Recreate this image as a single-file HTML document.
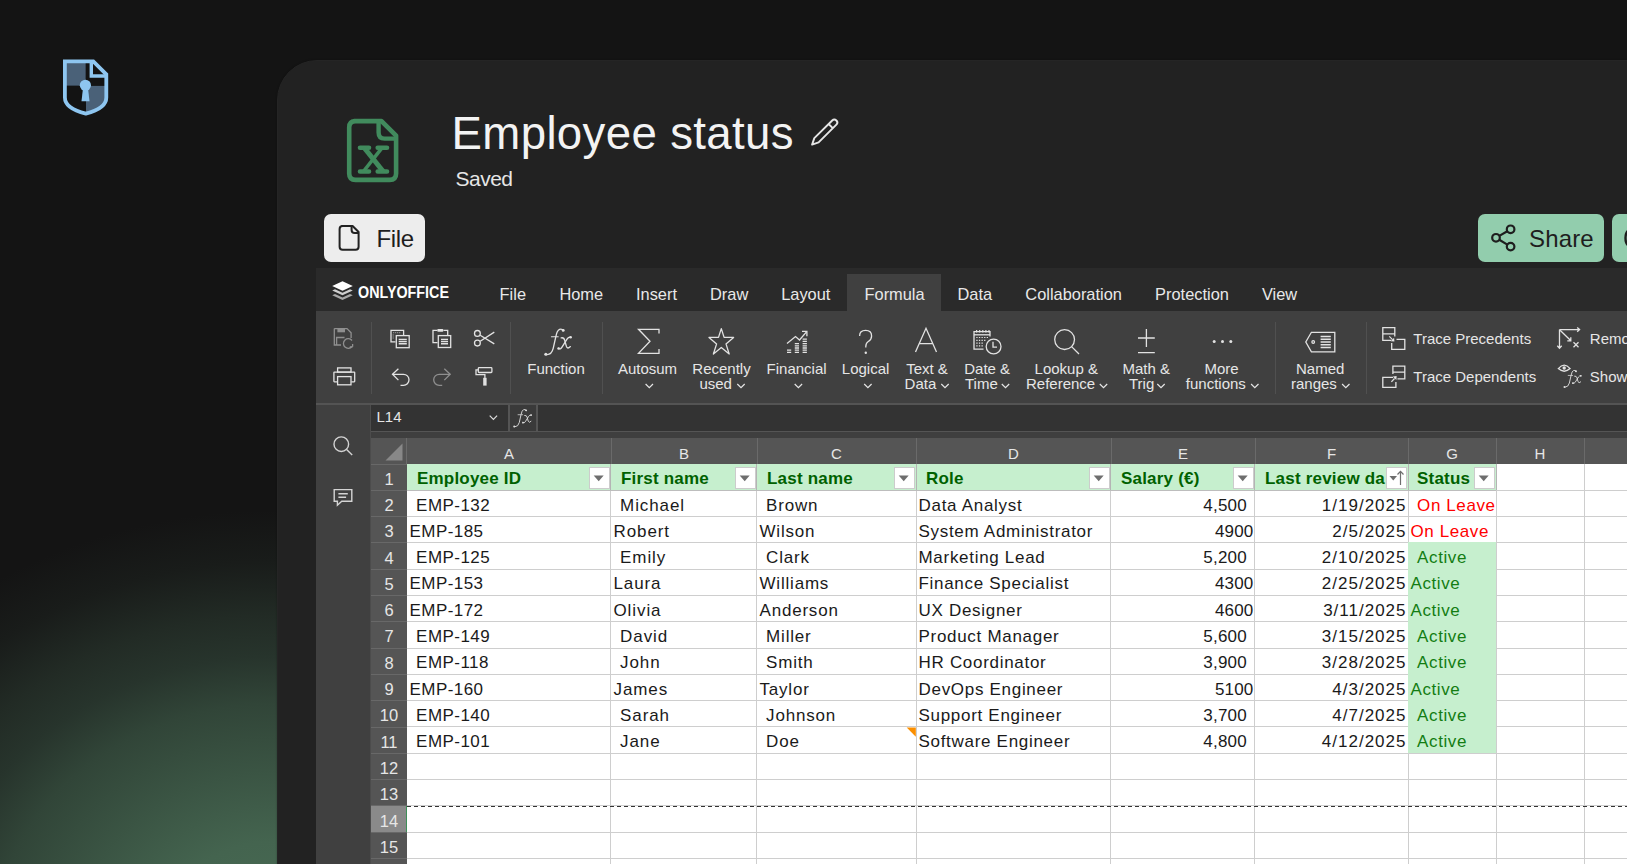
<!DOCTYPE html>
<html><head><meta charset="utf-8"><title>Employee status</title>
<style>
*{margin:0;padding:0;box-sizing:border-box}
html,body{width:1627px;height:864px;overflow:hidden;background:#131313;font-family:"Liberation Sans",sans-serif;position:relative}
.t{position:absolute;line-height:1;white-space:pre}
.r{position:absolute}
svg{position:absolute;overflow:visible}
</style></head><body>
<div class="r" style="left:0px;top:0px;width:1627px;height:864px;background:radial-gradient(ellipse 512px 430px at 277px 940px,#496c55 0%,#44644f 23%,#314538 55%,#27342c 66%,#222b25 75.5%,#191c1a 88%,#141414 100%);"></div>
<div class="r" style="left:277px;top:59.7px;width:1450px;height:900px;background:#222;border-radius:40px;box-shadow:0 0 2px rgba(0,0,0,.35);border:1px solid #252525;"></div>
<svg style="left:0;top:0" width="200" height="200" viewBox="0 0 200 200">
<path d="M86 62 V85.8 H106.2 V98 Q106.2 108 85.8 113.3 Q65 108 65 97 V85.8 H86 Z" fill="#4a6178"/>
<path d="M65 61.3 H85.8 V85.8 H65 Z" fill="#4a6178"/>
<path d="M86 85.8 H106.2 V98 Q106.2 108 85.8 113.3 Z" fill="#4a6178"/>
<path d="M86 85.8 V113.3 Q65 108 65 97 V85.8 Z" fill="#131313"/>
<path d="M85.8 61.3 H93 L106.2 74.5 V85.8 H85.8 Z" fill="#131313"/>
<path d="M64.9 61.3 H93.3 L106.3 74.3 V97.5 Q106.3 108.5 85.8 113.6 Q64.9 108.5 64.9 97.5 Z" fill="none" stroke="#8ec6f0" stroke-width="3.8" stroke-linejoin="miter"/>
<path d="M91.3 61.5 V76 H106" fill="none" stroke="#8ec6f0" stroke-width="3.4"/>
<circle cx="85.4" cy="85.3" r="5.6" fill="#8ec6f0"/>
<path d="M83 88 H88 L89.5 101.2 H81.5 Z" fill="#8ec6f0"/>
</svg>
<svg style="left:0;top:0" width="500" height="200" viewBox="0 0 500 200">
<path d="M354.2 121.1 H381.5 L396.1 135.7 V173.5 Q396.1 179.9 389.7 179.9 H355.6 Q349.2 179.9 349.2 173.5 V127.5 Q349.2 121.1 355.6 121.1 Z" fill="none" stroke="#418b5d" stroke-width="4.6" stroke-linejoin="round"/>
<path d="M378.6 121.5 V132.5 Q378.6 138.6 384.6 138.6 H396" fill="none" stroke="#418b5d" stroke-width="4.4"/>
<path d="M360 147.7 H369 M377.7 147.7 H387 M360 171.5 H369 M377.7 171.5 H387" stroke="#418b5d" stroke-width="4.6" stroke-linecap="round"/>
<path d="M364.2 147.7 L383.2 171.5" stroke="#418b5d" stroke-width="5"/><path d="M382.2 147.7 L363.4 171.5" stroke="#418b5d" stroke-width="3.6"/>
</svg>
<div class="t" style="left:451.6px;top:111.20px;font-size:45.6px;color:#f3f3f3;font-weight:400;letter-spacing:0.35px;">Employee status</div>
<svg style="left:0;top:0" width="900" height="200" viewBox="0 0 900 200">
<path d="M812.1 144.6 L814.3 138.1 L832.2 120.5 A2.97 2.97 0 0 1 836.4 124.7 L818.6 142.4 Z M828.6 124 L832.8 128.2" fill="none" stroke="#e6e6e6" stroke-width="1.9" stroke-linejoin="round"/>
</svg>
<div class="t" style="left:455.5px;top:167.82px;font-size:21px;color:#e6e6e6;font-weight:400;letter-spacing:-0.5px;">Saved</div>
<div class="r" style="left:323.5px;top:213.7px;width:101.3px;height:48.3px;background:#ededed;border-radius:7px;"></div>
<svg style="left:0;top:0" width="500" height="300" viewBox="0 0 500 300">
<path d="M341.6 226 H352.6 L358.6 232 V246.8 Q358.6 249.8 355.6 249.8 H342.6 Q339.6 249.8 339.6 246.8 V229 Q339.6 226 342.6 226 Z" fill="none" stroke="#222" stroke-width="2" stroke-linejoin="round"/>
<path d="M351.6 226.5 V230 Q351.6 233 354.6 233 H358.2" fill="none" stroke="#222" stroke-width="2"/>
</svg>
<div class="t" style="left:376.5px;top:226.58px;font-size:24px;color:#1e1e1e;font-weight:400;letter-spacing:-0.35px;">File</div>
<div class="r" style="left:1478px;top:213.9px;width:126.2px;height:48.1px;background:#92cdad;border-radius:7px;"></div>
<div class="r" style="left:1612px;top:213.9px;width:60px;height:48.1px;background:#92cdad;border-radius:7px;"></div>
<svg style="left:0;top:0" width="1627" height="300" viewBox="0 0 1627 300">
<g fill="none" stroke="#1e1e1e" stroke-width="2.2">
<circle cx="1496" cy="237.8" r="3.8"/><circle cx="1510.6" cy="229.3" r="3.8"/><circle cx="1510.6" cy="246.6" r="3.8"/>
<path d="M1499.3 235.9 L1507.3 231.2 M1499.3 239.7 L1507.3 244.6"/>
</g>
<path d="M1629 230 Q1625.5 232 1625.5 238 Q1625.5 244 1629 246" stroke="#1e1e1e" stroke-width="2.4" fill="none"/>
</svg>
<div class="t" style="left:1529.0px;top:226.58px;font-size:24px;color:#1e1e1e;font-weight:400;letter-spacing:0.15px;">Share</div>
<div class="r" style="left:316px;top:268px;width:1400px;height:43px;background:#2a2a2a;"></div>
<div class="r" style="left:847.4px;top:274.4px;width:93.5px;height:36.6px;background:#404040;"></div>
<svg style="left:0;top:0" width="500" height="320" viewBox="0 0 500 320">
<path d="M342.5 281.3 L352.8 286 L342.5 290.7 L332.2 286 Z" fill="#fff"/>
<path d="M335 289.3 L342.5 292.8 L350 289.3 L352.8 290.6 L342.5 295.3 L332.2 290.6 Z" fill="#cfcfcf"/>
<path d="M335 293.9 L342.5 297.4 L350 293.9 L352.8 295.2 L342.5 299.9 L332.2 295.2 Z" fill="#a8a8a8"/>
</svg>
<div class="t" style="left:358.0px;top:285.16px;font-size:16px;color:#ffffff;font-weight:700;letter-spacing:0px;transform:scaleX(0.895);transform-origin:0 0;">ONLYOFFICE</div>
<div class="t" style="left:499.6px;top:286.42px;font-size:16.4px;color:#e8e8e8;font-weight:400;letter-spacing:0px;">File</div>
<div class="t" style="left:559.4px;top:286.42px;font-size:16.4px;color:#e8e8e8;font-weight:400;letter-spacing:0px;">Home</div>
<div class="t" style="left:636.0px;top:286.42px;font-size:16.4px;color:#e8e8e8;font-weight:400;letter-spacing:0px;">Insert</div>
<div class="t" style="left:710.0px;top:286.42px;font-size:16.4px;color:#e8e8e8;font-weight:400;letter-spacing:0px;">Draw</div>
<div class="t" style="left:781.2px;top:286.42px;font-size:16.4px;color:#e8e8e8;font-weight:400;letter-spacing:0px;">Layout</div>
<div class="t" style="left:864.5px;top:286.42px;font-size:16.4px;color:#e8e8e8;font-weight:400;letter-spacing:0px;">Formula</div>
<div class="t" style="left:957.5px;top:286.42px;font-size:16.4px;color:#e8e8e8;font-weight:400;letter-spacing:0px;">Data</div>
<div class="t" style="left:1025.3px;top:286.42px;font-size:16.4px;color:#e8e8e8;font-weight:400;letter-spacing:0px;">Collaboration</div>
<div class="t" style="left:1155.1px;top:286.42px;font-size:16.4px;color:#e8e8e8;font-weight:400;letter-spacing:0px;">Protection</div>
<div class="t" style="left:1261.9px;top:286.42px;font-size:16.4px;color:#e8e8e8;font-weight:400;letter-spacing:0px;">View</div>
<div class="r" style="left:316px;top:311px;width:1400px;height:92px;background:#404040;"></div>
<div class="r" style="left:316px;top:402.6px;width:1400px;height:2.2px;background:#545454;"></div>
<div class="r" style="left:371px;top:322px;width:1px;height:71.5px;background:#505050;"></div>
<div class="r" style="left:510.3px;top:322px;width:1px;height:71.5px;background:#505050;"></div>
<div class="r" style="left:602px;top:322px;width:1px;height:71.5px;background:#505050;"></div>
<div class="r" style="left:1275px;top:322px;width:1px;height:71.5px;background:#505050;"></div>
<div class="r" style="left:1366px;top:322px;width:1px;height:71.5px;background:#505050;"></div>
<svg style="left:0;top:0" width="1627" height="420" viewBox="0 0 1627 420">
<g fill="none" stroke-width="1.3">
<!-- save -->
<g stroke="#8f8f8f">
<path d="M334.3 328.6 H347 L351.1 332.7 V338"/>
<path d="M334.3 328.6 V345 H341"/>
<path d="M336.6 345 V337.5 H344.5"/>
<path d="M352 346.5 A4.8 4.8 0 1 1 352 340.5"/>
<path d="M352.6 346.8 L349.8 346.8 M352.6 346.8 L352.6 344"/>
</g>
<rect x="337.4" y="328.9" width="7.6" height="3.4" fill="#8f8f8f"/>
<!-- print -->
<g stroke="#e2e2e2">
<rect x="337.6" y="367.9" width="13.4" height="4.2"/>
<path d="M337.2 381.8 H334.4 Q333.9 381.8 333.9 381.3 V372.6 Q333.9 372.1 334.4 372.1 H354.2 Q354.7 372.1 354.7 372.6 V381.3 Q354.7 381.8 354.2 381.8 H351.3"/>
<rect x="337.6" y="376.6" width="13.4" height="8.2"/>
</g>
<!-- copy -->
<g stroke="#e2e2e2">
<path d="M395.5 341.9 H391 V330.3 H403.6 V335"/>
<rect x="396.3" y="335.6" width="12.9" height="12.1"/>
<path d="M398.7 339.5 H406.8 M398.7 341.6 H406.8 M398.7 343.8 H406.8" stroke-width="1.4"/>
<path d="M393.2 332.6 H401 M393.2 334.6 V339" stroke="#9a9a9a" stroke-dasharray="1 1"/>
</g>
<!-- paste -->
<g stroke="#e2e2e2">
<path d="M437.5 342.7 H433 V330.3 H437 M443.5 330.3 H447.7 V335"/>
<rect x="438.3" y="335.6" width="12.4" height="11.9"/>
<path d="M441 339.5 H448 M441 341.6 H448 M441 343.8 H448" stroke-width="1.4"/>
</g>
<rect x="437.2" y="328.9" width="6.2" height="2.8" rx="1" fill="#e2e2e2"/>
<!-- scissors -->
<g stroke="#e2e2e2">
<circle cx="477.4" cy="333.4" r="2.9"/>
<circle cx="477.4" cy="343.1" r="2.9"/>
<path d="M480.2 335.2 L494.3 343.9 M480.2 341.3 L494.3 332.1"/>
</g>
<!-- undo -->
<g stroke="#e2e2e2">
<path d="M398.4 368.7 L392.5 374.3 L398.4 380.1"/>
<path d="M392.5 374.3 H403.5 A5.4 5.4 0 0 1 403.5 385.3 H400.5"/>
</g>
<!-- redo -->
<g stroke="#8f8f8f">
<path d="M444.3 368.7 L450.2 374.3 L444.3 380.1"/>
<path d="M450.2 374.3 H439.2 A5.4 5.4 0 0 0 439.2 385.3 H442.2"/>
</g>
<!-- painter -->
<g stroke="#e2e2e2">
<rect x="478.3" y="367.6" width="13.6" height="4.9" rx="0.8"/>
<path d="M478 369.9 H476 V374.6 H484.9 V378"/>
</g>
<rect x="483.2" y="377.8" width="3.4" height="7.8" fill="#e2e2e2"/>
</g>
</svg>
<svg style="left:0;top:0" width="1627" height="420" viewBox="0 0 1627 420">
<g fill="none" stroke="#e2e2e2" stroke-width="1.3">
<!-- sigma -->
<path d="M659 333.5 V329.3 H638.5 L650 341.3 L638.5 353.4 H659 V349"/>
<!-- star -->
<path d="M721.3 328.6 L724.1 337.4 L733.6 337.4 L726 343.9 L729.2 354 L721.3 347.5 L713.4 354 L716.6 343.9 L709 337.4 L718.5 337.4 Z" stroke-linejoin="round"/>
<!-- financial -->
<path d="M787 343.4 L795.5 336.6 L799.5 340 L806.5 331.8"/>
<path d="M802 331.3 H806.9 V336.2"/>
<path d="M787 350.2 H791.2 M787 352.4 H791.2 M794.8 343.6 H799 M794.8 345.8 H799 M794.8 348 H799 M794.8 350.2 H799 M794.8 352.4 H799 M802.6 339.2 H806.9 M802.6 341.4 H806.9 M802.6 343.6 H806.9 M802.6 345.8 H806.9 M802.6 348 H806.9 M802.6 350.2 H806.9 M802.6 352.4 H806.9" stroke-width="1.3"/>
<!-- question -->
<path d="M859.6 336 Q859.6 330.3 865.6 330.3 Q871.6 330.3 871.6 336 Q871.6 339.6 868.3 341.5 Q865.8 343 865.8 346.5 V347.5"/>
<!-- A -->
<path d="M915.5 352 L926 328.3 L936.5 352 M919.2 343.7 H932.8"/>
<!-- calendar clock -->
<path d="M990 336.5 V331.6 H974 V349.2 H983.5"/>
<path d="M974 334.8 H990" />
<path d="M976.3 337.5 h1.3 m1.3 0 h1.3 m1.3 0 h1.3 m1.3 0 h1.3 m1.3 0 h1.3 M976.3 340.3 h1.3 m1.3 0 h1.3 m1.3 0 h1.3 m1.3 0 h1.3 M976.3 343.1 h1.3 m1.3 0 h1.3 m1.3 0 h1.3 M976.3 345.9 h1.3 m1.3 0 h1.3 m1.3 0 h1.3" stroke-width="1.2"/>
<path d="M976.6 330 V332.6 M979.7 330 V332.6 M982.8 330 V332.6 M985.9 330 V332.6 M989 330 V332.6" stroke-width="1.2"/>
<circle cx="993.6" cy="346.5" r="7.4"/>
<path d="M993 341.8 V347.1 H997"/>
<!-- search -->
<circle cx="1064.6" cy="339.6" r="9.9"/>
<path d="M1071.6 346.6 L1079 354"/>
<!-- plus minus -->
<path d="M1146.4 329 V347 M1138 338 H1154.8 M1138 352.6 H1154.8"/>
<!-- tag -->
<path d="M1311.4 332.3 H1334.8 V351.8 H1311.4 L1305.8 342 Z"/>
<circle cx="1313.2" cy="342" r="1.3"/>
<path d="M1320.6 336.4 H1330.8 M1320.6 339.2 H1330.8 M1320.6 342 H1330.8 M1320.6 344.8 H1330.8 M1320.6 347.6 H1330.8" stroke-width="1.5"/>
<!-- trace precedents -->
<path d="M1391 340.4 H1382.8 V327.6 H1394.8 V336.5 M1382.8 333.8 H1394.8"/>
<path d="M1396.5 339.3 H1404.8 V349.3 H1391.7 V343"/>
<path d="M1389.3 336.4 L1392.5 339.6" stroke-width="1.2"/>
<path d="M1394.4 341.6 L1390.6 341.3 L1394.1 337.8 Z" fill="#e2e2e2" stroke="none"/>
<!-- trace dependents -->
<path d="M1392.9 374 V366.1 H1404.8 V378.8 H1397.5 M1392.9 372.2 H1404.8"/>
<path d="M1393 377.4 H1382.8 V387.3 H1395.9 V382"/>
<path d="M1391.4 381.8 L1394.5 378.5" stroke-width="1.2"/>
<path d="M1396.6 376.1 L1396.4 380 L1392.8 376.4 Z" fill="#e2e2e2" stroke="none"/>
<!-- remove arrows -->
<path d="M1559.5 329.6 V348 M1557.3 345.8 L1559.5 348.2 L1561.7 345.8"/>
<path d="M1559.5 329.6 H1579.6 M1577.2 327.4 L1579.6 329.6 L1577.2 331.8"/>
<path d="M1560.1 330.2 L1570.6 340.5 M1570.8 337.3 V340.8 H1567.3"/>
<path d="M1573.5 342.3 L1578.5 347.3 M1578.5 342.3 L1573.5 347.3"/>
<!-- show formulas eye -->
<path d="M1558.3 368.6 Q1564.2 361.8 1570.1 368.6 Q1564.2 373.8 1558.3 368.6 Z"/>
<circle cx="1564.2" cy="368" r="1.7" fill="#e2e2e2" stroke="none"/>
</g>
<!-- dots -->
<g fill="#e2e2e2"><circle cx="1214.2" cy="341.4" r="1.5"/><circle cx="1222.5" cy="341.4" r="1.5"/><circle cx="1230.8" cy="341.4" r="1.5"/></g>
<circle cx="865.8" cy="352.8" r="1.2" fill="#e2e2e2"/>
</svg>
<svg style="left:0;top:0" width="1627" height="500" viewBox="0 0 1627 500"><g transform="translate(542.8 327.8) scale(1.0)" fill="none" stroke="#e2e2e2" stroke-width="1.35" stroke-linecap="round"><path d="M20.6 2.6 Q19 0.7 16.8 1.5 Q14.2 2.6 13.1 8.5 L10.4 20.5 Q8.9 26.6 4.2 26.8"/><path d="M8.6 9 H15.4" stroke-width="1.1"/><path d="M15.9 20.5 Q17.6 22 19.2 19.4 L24.2 11.4 Q25.6 9.1 27.8 9.4"/><path d="M18.4 10 Q21.2 9.4 22 12.8 L23.6 18.6 Q24.6 21.7 27.6 18.8"/></g><g transform="translate(542.8 327.8) scale(1.0)" fill="#e2e2e2"><circle cx="20.4" cy="2.6" r="1.45"/><circle cx="3" cy="26.4" r="1.5"/><circle cx="15.8" cy="20.7" r="1.3"/><circle cx="27.8" cy="9.5" r="1.3"/></g></svg>
<svg style="left:0;top:0" width="1627" height="500" viewBox="0 0 1627 500"><g transform="translate(1562.5 369.5) scale(0.66)" fill="none" stroke="#e2e2e2" stroke-width="1.35" stroke-linecap="round"><path d="M20.6 2.6 Q19 0.7 16.8 1.5 Q14.2 2.6 13.1 8.5 L10.4 20.5 Q8.9 26.6 4.2 26.8"/><path d="M8.6 9 H15.4" stroke-width="1.1"/><path d="M15.9 20.5 Q17.6 22 19.2 19.4 L24.2 11.4 Q25.6 9.1 27.8 9.4"/><path d="M18.4 10 Q21.2 9.4 22 12.8 L23.6 18.6 Q24.6 21.7 27.6 18.8"/></g><g transform="translate(1562.5 369.5) scale(0.66)" fill="#e2e2e2"><circle cx="20.4" cy="2.6" r="1.45"/><circle cx="3" cy="26.4" r="1.5"/><circle cx="15.8" cy="20.7" r="1.3"/><circle cx="27.8" cy="9.5" r="1.3"/></g></svg>
<div class="t" style="left:256.0px;width:600px;text-align:center;top:361.10px;font-size:15px;color:#e6e6e6;font-weight:400;letter-spacing:0px;">Function</div>
<div class="t" style="left:347.5px;width:600px;text-align:center;top:361.10px;font-size:15px;color:#e6e6e6;font-weight:400;letter-spacing:0px;">Autosum</div>
<svg style="left:0;top:0" width="1627" height="420" viewBox="0 0 1627 420"><path d="M645.5999999999999 384 L649.3 387.7 L653.0 384" fill="none" stroke="#e6e6e6" stroke-width="1.2"/></svg>
<div class="t" style="left:421.5px;width:600px;text-align:center;top:361.10px;font-size:15px;color:#e6e6e6;font-weight:400;letter-spacing:0px;">Recently</div>
<div class="t" style="left:699.4px;top:375.50px;font-size:15px;color:#e6e6e6;font-weight:400;letter-spacing:0px;">used</div>
<svg style="left:0;top:0" width="1627" height="420" viewBox="0 0 1627 420"><path d="M737.3 384 L741 387.7 L744.7 384" fill="none" stroke="#e6e6e6" stroke-width="1.2"/></svg>
<div class="t" style="left:496.6px;width:600px;text-align:center;top:361.10px;font-size:15px;color:#e6e6e6;font-weight:400;letter-spacing:0px;">Financial</div>
<svg style="left:0;top:0" width="1627" height="420" viewBox="0 0 1627 420"><path d="M794.6999999999999 384 L798.4 387.7 L802.1 384" fill="none" stroke="#e6e6e6" stroke-width="1.2"/></svg>
<div class="t" style="left:565.6px;width:600px;text-align:center;top:361.10px;font-size:15px;color:#e6e6e6;font-weight:400;letter-spacing:0px;">Logical</div>
<svg style="left:0;top:0" width="1627" height="420" viewBox="0 0 1627 420"><path d="M864.1999999999999 384 L867.9 387.7 L871.6 384" fill="none" stroke="#e6e6e6" stroke-width="1.2"/></svg>
<div class="t" style="left:627.0px;width:600px;text-align:center;top:361.10px;font-size:15px;color:#e6e6e6;font-weight:400;letter-spacing:0px;">Text &amp;</div>
<div class="t" style="left:904.6px;top:375.50px;font-size:15px;color:#e6e6e6;font-weight:400;letter-spacing:0px;">Data</div>
<svg style="left:0;top:0" width="1627" height="420" viewBox="0 0 1627 420"><path d="M941.3 384 L945 387.7 L948.7 384" fill="none" stroke="#e6e6e6" stroke-width="1.2"/></svg>
<div class="t" style="left:687.2px;width:600px;text-align:center;top:361.10px;font-size:15px;color:#e6e6e6;font-weight:400;letter-spacing:0px;">Date &amp;</div>
<div class="t" style="left:965.0px;top:375.50px;font-size:15px;color:#e6e6e6;font-weight:400;letter-spacing:0px;">Time</div>
<svg style="left:0;top:0" width="1627" height="420" viewBox="0 0 1627 420"><path d="M1001.8 384 L1005.5 387.7 L1009.2 384" fill="none" stroke="#e6e6e6" stroke-width="1.2"/></svg>
<div class="t" style="left:766.3px;width:600px;text-align:center;top:361.10px;font-size:15px;color:#e6e6e6;font-weight:400;letter-spacing:0px;">Lookup &amp;</div>
<div class="t" style="left:1026.0px;top:375.50px;font-size:15px;color:#e6e6e6;font-weight:400;letter-spacing:0px;">Reference</div>
<svg style="left:0;top:0" width="1627" height="420" viewBox="0 0 1627 420"><path d="M1099.8 384 L1103.5 387.7 L1107.2 384" fill="none" stroke="#e6e6e6" stroke-width="1.2"/></svg>
<div class="t" style="left:846.2px;width:600px;text-align:center;top:361.10px;font-size:15px;color:#e6e6e6;font-weight:400;letter-spacing:0px;">Math &amp;</div>
<div class="t" style="left:1129.0px;top:375.50px;font-size:15px;color:#e6e6e6;font-weight:400;letter-spacing:0px;">Trig</div>
<svg style="left:0;top:0" width="1627" height="420" viewBox="0 0 1627 420"><path d="M1157.3 384 L1161 387.7 L1164.7 384" fill="none" stroke="#e6e6e6" stroke-width="1.2"/></svg>
<div class="t" style="left:921.5px;width:600px;text-align:center;top:361.10px;font-size:15px;color:#e6e6e6;font-weight:400;letter-spacing:0px;">More</div>
<div class="t" style="left:1185.8px;top:375.50px;font-size:15px;color:#e6e6e6;font-weight:400;letter-spacing:0px;">functions</div>
<svg style="left:0;top:0" width="1627" height="420" viewBox="0 0 1627 420"><path d="M1251.1 384 L1254.8 387.7 L1258.5 384" fill="none" stroke="#e6e6e6" stroke-width="1.2"/></svg>
<div class="t" style="left:1020.2px;width:600px;text-align:center;top:361.10px;font-size:15px;color:#e6e6e6;font-weight:400;letter-spacing:0px;">Named</div>
<div class="t" style="left:1291.0px;top:375.50px;font-size:15px;color:#e6e6e6;font-weight:400;letter-spacing:0px;">ranges</div>
<svg style="left:0;top:0" width="1627" height="420" viewBox="0 0 1627 420"><path d="M1342.1 384 L1345.8 387.7 L1349.5 384" fill="none" stroke="#e6e6e6" stroke-width="1.2"/></svg>
<div class="t" style="left:1413.3px;top:330.50px;font-size:15px;color:#e6e6e6;font-weight:400;letter-spacing:0px;">Trace Precedents</div>
<div class="t" style="left:1413.3px;top:368.70px;font-size:15px;color:#e6e6e6;font-weight:400;letter-spacing:0px;">Trace Dependents</div>
<div class="t" style="left:1589.8px;top:330.50px;font-size:15px;color:#e6e6e6;font-weight:400;letter-spacing:0px;">Remove arrows</div>
<div class="t" style="left:1589.8px;top:368.70px;font-size:15px;color:#e6e6e6;font-weight:400;letter-spacing:0px;">Show formulas</div>
<div class="r" style="left:316px;top:404.8px;width:1400px;height:27.5px;background:#404040;"></div>
<div class="r" style="left:371px;top:405px;width:136.7px;height:25.7px;background:#333333;"></div>
<div class="r" style="left:509.7px;top:405px;width:26.3px;height:25.7px;background:#3a3a3a;"></div>
<div class="r" style="left:538px;top:405px;width:1200px;height:25.7px;background:#333333;"></div>
<div class="r" style="left:507.7px;top:405px;width:2px;height:25.7px;background:#555;"></div>
<div class="r" style="left:536px;top:405px;width:2px;height:25.7px;background:#555;"></div>
<div class="r" style="left:371px;top:430.7px;width:1300px;height:1.6px;background:#555;"></div>
<div class="r" style="left:371px;top:432.3px;width:1300px;height:5.7px;background:#3f3f3f;"></div>
<div class="t" style="left:376.5px;top:409.30px;font-size:15px;color:#e6e6e6;font-weight:400;letter-spacing:0px;">L14</div>
<svg style="left:0;top:0" width="1627" height="420" viewBox="0 0 1627 420"><path d="M489.7 415.6 L493.4 419.3 L497.09999999999997 415.6" fill="none" stroke="#dcdcdc" stroke-width="1.2"/></svg>
<svg style="left:0;top:0" width="1627" height="500" viewBox="0 0 1627 500"><g transform="translate(512.2 408.6) scale(0.68)" fill="none" stroke="#dcdcdc" stroke-width="1.35" stroke-linecap="round"><path d="M20.6 2.6 Q19 0.7 16.8 1.5 Q14.2 2.6 13.1 8.5 L10.4 20.5 Q8.9 26.6 4.2 26.8"/><path d="M8.6 9 H15.4" stroke-width="1.1"/><path d="M15.9 20.5 Q17.6 22 19.2 19.4 L24.2 11.4 Q25.6 9.1 27.8 9.4"/><path d="M18.4 10 Q21.2 9.4 22 12.8 L23.6 18.6 Q24.6 21.7 27.6 18.8"/></g><g transform="translate(512.2 408.6) scale(0.68)" fill="#dcdcdc"><circle cx="20.4" cy="2.6" r="1.45"/><circle cx="3" cy="26.4" r="1.5"/><circle cx="15.8" cy="20.7" r="1.3"/><circle cx="27.8" cy="9.5" r="1.3"/></g></svg>
<div class="r" style="left:316px;top:404.8px;width:54.2px;height:500px;background:#404040;"></div>
<div class="r" style="left:369.8px;top:404.8px;width:1.2px;height:500px;background:#4c4c4c;"></div>
<svg style="left:0;top:0" width="400" height="520" viewBox="0 0 400 520">
<g fill="none" stroke="#d4d4d4" stroke-width="1.4">
<circle cx="341.3" cy="444.2" r="7.3"/>
<path d="M346.6 449.6 L352.2 455"/>
<path d="M334.2 489.6 H351.8 V501.2 H341.8 L337.4 505.2 V501.2 H334.2 Z"/>
<path d="M338.4 493.8 H347.8 M338.4 497.2 H346.1" stroke-width="1.4"/>
</g></svg>
<div class="r" style="left:407px;top:464px;width:1300px;height:500px;background:#ffffff;"></div>
<div class="r" style="left:371px;top:438px;width:1300px;height:26px;background:#555555;"></div>
<div class="r" style="left:371px;top:464px;width:36px;height:500px;background:#555555;"></div>
<svg style="left:0;top:0" width="420" height="470" viewBox="0 0 420 470"><path d="M385.5 460.5 L402.5 443.5 V460.5 Z" fill="#888"/></svg>
<div class="r" style="left:407px;top:464px;width:1089px;height:26.3px;background:#c6efce;"></div>
<div class="r" style="left:371px;top:806.4000000000001px;width:35.5px;height:26px;background:#8a8a8a;"></div>
<div class="r" style="left:407px;top:490px;width:1300px;height:1px;background:#cecece;"></div>
<div class="r" style="left:407px;top:516px;width:1300px;height:1px;background:#cecece;"></div>
<div class="r" style="left:407px;top:542px;width:1300px;height:1px;background:#cecece;"></div>
<div class="r" style="left:407px;top:569px;width:1300px;height:1px;background:#cecece;"></div>
<div class="r" style="left:407px;top:595px;width:1300px;height:1px;background:#cecece;"></div>
<div class="r" style="left:407px;top:621px;width:1300px;height:1px;background:#cecece;"></div>
<div class="r" style="left:407px;top:648px;width:1300px;height:1px;background:#cecece;"></div>
<div class="r" style="left:407px;top:674px;width:1300px;height:1px;background:#cecece;"></div>
<div class="r" style="left:407px;top:700px;width:1300px;height:1px;background:#cecece;"></div>
<div class="r" style="left:407px;top:726px;width:1300px;height:1px;background:#cecece;"></div>
<div class="r" style="left:407px;top:753px;width:1300px;height:1px;background:#cecece;"></div>
<div class="r" style="left:407px;top:779px;width:1300px;height:1px;background:#cecece;"></div>
<div class="r" style="left:407px;top:805px;width:1300px;height:1px;background:#cecece;"></div>
<div class="r" style="left:407px;top:832px;width:1300px;height:1px;background:#cecece;"></div>
<div class="r" style="left:407px;top:858px;width:1300px;height:1px;background:#cecece;"></div>
<div class="r" style="left:407px;top:884px;width:1300px;height:1px;background:#cecece;"></div>
<div class="r" style="left:407px;top:911px;width:1300px;height:1px;background:#cecece;"></div>
<div class="r" style="left:610px;top:464px;width:1px;height:500px;background:#cecece;"></div>
<div class="r" style="left:756px;top:464px;width:1px;height:500px;background:#cecece;"></div>
<div class="r" style="left:916px;top:464px;width:1px;height:500px;background:#cecece;"></div>
<div class="r" style="left:1110px;top:464px;width:1px;height:500px;background:#cecece;"></div>
<div class="r" style="left:1254px;top:464px;width:1px;height:500px;background:#cecece;"></div>
<div class="r" style="left:1408px;top:464px;width:1px;height:500px;background:#cecece;"></div>
<div class="r" style="left:1496px;top:464px;width:1px;height:500px;background:#cecece;"></div>
<div class="r" style="left:1584px;top:464px;width:1px;height:500px;background:#cecece;"></div>
<div class="r" style="left:1680px;top:464px;width:1px;height:500px;background:#cecece;"></div>
<div class="r" style="left:610px;top:464px;width:1px;height:26.3px;background:#b4b4b4;"></div>
<div class="r" style="left:756px;top:464px;width:1px;height:26.3px;background:#b4b4b4;"></div>
<div class="r" style="left:916px;top:464px;width:1px;height:26.3px;background:#b4b4b4;"></div>
<div class="r" style="left:1110px;top:464px;width:1px;height:26.3px;background:#b4b4b4;"></div>
<div class="r" style="left:1254px;top:464px;width:1px;height:26.3px;background:#b4b4b4;"></div>
<div class="r" style="left:1408px;top:464px;width:1px;height:26.3px;background:#b4b4b4;"></div>
<div class="r" style="left:1496px;top:464px;width:1px;height:26.3px;background:#b4b4b4;"></div>
<div class="r" style="left:407px;top:490px;width:1089px;height:1px;background:#bdbdbd;"></div>
<div class="r" style="left:610.5px;top:438px;width:1px;height:26px;background:#6a6a6a;"></div>
<div class="r" style="left:756.5px;top:438px;width:1px;height:26px;background:#6a6a6a;"></div>
<div class="r" style="left:915.5px;top:438px;width:1px;height:26px;background:#6a6a6a;"></div>
<div class="r" style="left:1110.5px;top:438px;width:1px;height:26px;background:#6a6a6a;"></div>
<div class="r" style="left:1254.5px;top:438px;width:1px;height:26px;background:#6a6a6a;"></div>
<div class="r" style="left:1407.5px;top:438px;width:1px;height:26px;background:#6a6a6a;"></div>
<div class="r" style="left:1495.5px;top:438px;width:1px;height:26px;background:#6a6a6a;"></div>
<div class="r" style="left:1583.5px;top:438px;width:1px;height:26px;background:#6a6a6a;"></div>
<div class="r" style="left:1679.5px;top:438px;width:1px;height:26px;background:#6a6a6a;"></div>
<div class="r" style="left:406px;top:438px;width:1px;height:26px;background:#6a6a6a;"></div>
<div class="r" style="left:371px;top:489.8px;width:36px;height:1px;background:#686868;"></div>
<div class="r" style="left:371px;top:516.1px;width:36px;height:1px;background:#686868;"></div>
<div class="r" style="left:371px;top:542.4px;width:36px;height:1px;background:#686868;"></div>
<div class="r" style="left:371px;top:568.7px;width:36px;height:1px;background:#686868;"></div>
<div class="r" style="left:371px;top:595.0px;width:36px;height:1px;background:#686868;"></div>
<div class="r" style="left:371px;top:621.3px;width:36px;height:1px;background:#686868;"></div>
<div class="r" style="left:371px;top:647.6px;width:36px;height:1px;background:#686868;"></div>
<div class="r" style="left:371px;top:673.9px;width:36px;height:1px;background:#686868;"></div>
<div class="r" style="left:371px;top:700.2px;width:36px;height:1px;background:#686868;"></div>
<div class="r" style="left:371px;top:726.5px;width:36px;height:1px;background:#686868;"></div>
<div class="r" style="left:371px;top:752.8px;width:36px;height:1px;background:#686868;"></div>
<div class="r" style="left:371px;top:779.1px;width:36px;height:1px;background:#686868;"></div>
<div class="r" style="left:371px;top:805.4px;width:36px;height:1px;background:#686868;"></div>
<div class="r" style="left:371px;top:831.7px;width:36px;height:1px;background:#686868;"></div>
<div class="r" style="left:371px;top:858.0px;width:36px;height:1px;background:#686868;"></div>
<div class="r" style="left:371px;top:884.3px;width:36px;height:1px;background:#686868;"></div>
<div class="r" style="left:371px;top:910.6px;width:36px;height:1px;background:#686868;"></div>
<div class="r" style="left:371px;top:463.6px;width:36px;height:1px;background:#686868;"></div>
<div class="r" style="left:1407.6px;top:542.4px;width:88.9px;height:210.9px;background:#c6efce;"></div>
<div class="t" style="left:209.0px;width:600px;text-align:center;top:445.60px;font-size:15px;color:#e6e6e6;font-weight:400;letter-spacing:0px;">A</div>
<div class="t" style="left:384.0px;width:600px;text-align:center;top:445.60px;font-size:15px;color:#e6e6e6;font-weight:400;letter-spacing:0px;">B</div>
<div class="t" style="left:536.5px;width:600px;text-align:center;top:445.60px;font-size:15px;color:#e6e6e6;font-weight:400;letter-spacing:0px;">C</div>
<div class="t" style="left:713.5px;width:600px;text-align:center;top:445.60px;font-size:15px;color:#e6e6e6;font-weight:400;letter-spacing:0px;">D</div>
<div class="t" style="left:883.0px;width:600px;text-align:center;top:445.60px;font-size:15px;color:#e6e6e6;font-weight:400;letter-spacing:0px;">E</div>
<div class="t" style="left:1031.5px;width:600px;text-align:center;top:445.60px;font-size:15px;color:#e6e6e6;font-weight:400;letter-spacing:0px;">F</div>
<div class="t" style="left:1152.0px;width:600px;text-align:center;top:445.60px;font-size:15px;color:#e6e6e6;font-weight:400;letter-spacing:0px;">G</div>
<div class="t" style="left:1240.0px;width:600px;text-align:center;top:445.60px;font-size:15px;color:#e6e6e6;font-weight:400;letter-spacing:0px;">H</div>
<div class="t" style="left:1332.0px;width:600px;text-align:center;top:445.60px;font-size:15px;color:#e6e6e6;font-weight:400;letter-spacing:0px;">I</div>
<div class="t" style="left:89.0px;width:600px;text-align:center;top:470.63px;font-size:16.5px;color:#e6e6e6;font-weight:400;letter-spacing:0px;">1</div>
<div class="t" style="left:89.0px;width:600px;text-align:center;top:496.93px;font-size:16.5px;color:#e6e6e6;font-weight:400;letter-spacing:0px;">2</div>
<div class="t" style="left:89.0px;width:600px;text-align:center;top:523.23px;font-size:16.5px;color:#e6e6e6;font-weight:400;letter-spacing:0px;">3</div>
<div class="t" style="left:89.0px;width:600px;text-align:center;top:549.53px;font-size:16.5px;color:#e6e6e6;font-weight:400;letter-spacing:0px;">4</div>
<div class="t" style="left:89.0px;width:600px;text-align:center;top:575.83px;font-size:16.5px;color:#e6e6e6;font-weight:400;letter-spacing:0px;">5</div>
<div class="t" style="left:89.0px;width:600px;text-align:center;top:602.13px;font-size:16.5px;color:#e6e6e6;font-weight:400;letter-spacing:0px;">6</div>
<div class="t" style="left:89.0px;width:600px;text-align:center;top:628.43px;font-size:16.5px;color:#e6e6e6;font-weight:400;letter-spacing:0px;">7</div>
<div class="t" style="left:89.0px;width:600px;text-align:center;top:654.73px;font-size:16.5px;color:#e6e6e6;font-weight:400;letter-spacing:0px;">8</div>
<div class="t" style="left:89.0px;width:600px;text-align:center;top:681.03px;font-size:16.5px;color:#e6e6e6;font-weight:400;letter-spacing:0px;">9</div>
<div class="t" style="left:89.0px;width:600px;text-align:center;top:707.33px;font-size:16.5px;color:#e6e6e6;font-weight:400;letter-spacing:0px;">10</div>
<div class="t" style="left:89.0px;width:600px;text-align:center;top:733.63px;font-size:16.5px;color:#e6e6e6;font-weight:400;letter-spacing:0px;">11</div>
<div class="t" style="left:89.0px;width:600px;text-align:center;top:759.93px;font-size:16.5px;color:#e6e6e6;font-weight:400;letter-spacing:0px;">12</div>
<div class="t" style="left:89.0px;width:600px;text-align:center;top:786.23px;font-size:16.5px;color:#e6e6e6;font-weight:400;letter-spacing:0px;">13</div>
<div class="t" style="left:89.0px;width:600px;text-align:center;top:812.53px;font-size:16.5px;color:#e6e6e6;font-weight:400;letter-spacing:0px;">14</div>
<div class="t" style="left:89.0px;width:600px;text-align:center;top:838.83px;font-size:16.5px;color:#e6e6e6;font-weight:400;letter-spacing:0px;">15</div>
<div class="t" style="left:417.0px;top:470.21px;font-size:17px;color:#006100;font-weight:700;letter-spacing:0.2px;">Employee ID</div>
<div class="t" style="left:621.0px;top:470.21px;font-size:17px;color:#006100;font-weight:700;letter-spacing:0.2px;">First name</div>
<div class="t" style="left:767.0px;top:470.21px;font-size:17px;color:#006100;font-weight:700;letter-spacing:0.2px;">Last name</div>
<div class="t" style="left:926.0px;top:470.21px;font-size:17px;color:#006100;font-weight:700;letter-spacing:0.2px;">Role</div>
<div class="t" style="left:1121.0px;top:470.21px;font-size:17px;color:#006100;font-weight:700;letter-spacing:0.2px;">Salary (€)</div>
<div class="t" style="left:1265.0px;top:470.21px;font-size:17px;color:#006100;font-weight:700;letter-spacing:0.2px;">Last review da</div>
<div class="t" style="left:1417.0px;top:470.21px;font-size:17px;color:#006100;font-weight:700;letter-spacing:0.2px;">Status</div>
<div class="r" style="left:588.5px;top:467.4px;width:21.2px;height:21.2px;background:#ffffff;border:1px solid #cccccc;"></div>
<svg style="left:0;top:0" width="1627" height="500" viewBox="0 0 1627 500"><path d="M593.7 475.5 L603.7 475.5 L598.7 481.3 Z" fill="#6e6e6e"/></svg>
<div class="r" style="left:734.5px;top:467.4px;width:21.2px;height:21.2px;background:#ffffff;border:1px solid #cccccc;"></div>
<svg style="left:0;top:0" width="1627" height="500" viewBox="0 0 1627 500"><path d="M739.7 475.5 L749.7 475.5 L744.7 481.3 Z" fill="#6e6e6e"/></svg>
<div class="r" style="left:893.5px;top:467.4px;width:21.2px;height:21.2px;background:#ffffff;border:1px solid #cccccc;"></div>
<svg style="left:0;top:0" width="1627" height="500" viewBox="0 0 1627 500"><path d="M898.7 475.5 L908.7 475.5 L903.7 481.3 Z" fill="#6e6e6e"/></svg>
<div class="r" style="left:1088.5px;top:467.4px;width:21.2px;height:21.2px;background:#ffffff;border:1px solid #cccccc;"></div>
<svg style="left:0;top:0" width="1627" height="500" viewBox="0 0 1627 500"><path d="M1093.7 475.5 L1103.7 475.5 L1098.7 481.3 Z" fill="#6e6e6e"/></svg>
<div class="r" style="left:1232.5px;top:467.4px;width:21.2px;height:21.2px;background:#ffffff;border:1px solid #cccccc;"></div>
<svg style="left:0;top:0" width="1627" height="500" viewBox="0 0 1627 500"><path d="M1237.7 475.5 L1247.7 475.5 L1242.7 481.3 Z" fill="#6e6e6e"/></svg>
<div class="r" style="left:1385.5px;top:467.4px;width:21.2px;height:21.2px;background:#ffffff;border:1px solid #cccccc;"></div>
<svg style="left:0;top:0" width="1627" height="500" viewBox="0 0 1627 500"><path d="M1389.5 476 L1397 476 L1393.25 480.5 Z" fill="#6e6e6e"/><path d="M1400.5 471.5 V485 M1397.5 474.5 L1400.5 471.3 L1403.5 474.5" stroke="#6e6e6e" stroke-width="1.2" fill="none"/></svg>
<div class="r" style="left:1473.5px;top:467.4px;width:21.2px;height:21.2px;background:#ffffff;border:1px solid #cccccc;"></div>
<svg style="left:0;top:0" width="1627" height="500" viewBox="0 0 1627 500"><path d="M1478.7 475.5 L1488.7 475.5 L1483.7 481.3 Z" fill="#6e6e6e"/></svg>
<div class="t" style="left:416.1px;top:496.51px;font-size:17px;color:#1a1a1a;font-weight:400;letter-spacing:0.45px;">EMP-132</div>
<div class="t" style="left:620.1px;top:496.51px;font-size:17px;color:#1a1a1a;font-weight:400;letter-spacing:0.9px;">Michael</div>
<div class="t" style="left:766.1px;top:496.51px;font-size:17px;color:#1a1a1a;font-weight:400;letter-spacing:0.8px;">Brown</div>
<div class="t" style="left:918.5px;top:496.51px;font-size:17px;color:#1a1a1a;font-weight:400;letter-spacing:0.7px;">Data Analyst</div>
<div class="t" style="right:380.1px;top:496.51px;font-size:17px;color:#1a1a1a;font-weight:400;letter-spacing:0.2px;">4,500</div>
<div class="t" style="right:220.5px;top:496.51px;font-size:17px;color:#1a1a1a;font-weight:400;letter-spacing:1.0px;">1/19/2025</div>
<div class="t" style="left:1417.1px;top:496.51px;font-size:17px;color:#ff0000;font-weight:400;letter-spacing:0.6px;">On Leave</div>
<div class="t" style="left:409.5px;top:522.81px;font-size:17px;color:#1a1a1a;font-weight:400;letter-spacing:0.45px;">EMP-185</div>
<div class="t" style="left:613.5px;top:522.81px;font-size:17px;color:#1a1a1a;font-weight:400;letter-spacing:0.9px;">Robert</div>
<div class="t" style="left:759.5px;top:522.81px;font-size:17px;color:#1a1a1a;font-weight:400;letter-spacing:0.8px;">Wilson</div>
<div class="t" style="left:918.5px;top:522.81px;font-size:17px;color:#1a1a1a;font-weight:400;letter-spacing:0.7px;">System Administrator</div>
<div class="t" style="right:373.5px;top:522.81px;font-size:17px;color:#1a1a1a;font-weight:400;letter-spacing:0.2px;">4900</div>
<div class="t" style="right:220.5px;top:522.81px;font-size:17px;color:#1a1a1a;font-weight:400;letter-spacing:1.0px;">2/5/2025</div>
<div class="t" style="left:1410.5px;top:522.81px;font-size:17px;color:#ff0000;font-weight:400;letter-spacing:0.6px;">On Leave</div>
<div class="t" style="left:416.1px;top:549.11px;font-size:17px;color:#1a1a1a;font-weight:400;letter-spacing:0.45px;">EMP-125</div>
<div class="t" style="left:620.1px;top:549.11px;font-size:17px;color:#1a1a1a;font-weight:400;letter-spacing:0.9px;">Emily</div>
<div class="t" style="left:766.1px;top:549.11px;font-size:17px;color:#1a1a1a;font-weight:400;letter-spacing:0.8px;">Clark</div>
<div class="t" style="left:918.5px;top:549.11px;font-size:17px;color:#1a1a1a;font-weight:400;letter-spacing:0.7px;">Marketing Lead</div>
<div class="t" style="right:380.1px;top:549.11px;font-size:17px;color:#1a1a1a;font-weight:400;letter-spacing:0.2px;">5,200</div>
<div class="t" style="right:220.5px;top:549.11px;font-size:17px;color:#1a1a1a;font-weight:400;letter-spacing:1.0px;">2/10/2025</div>
<div class="t" style="left:1417.1px;top:549.11px;font-size:17px;color:#137d13;font-weight:400;letter-spacing:0.6px;">Active</div>
<div class="t" style="left:409.5px;top:575.41px;font-size:17px;color:#1a1a1a;font-weight:400;letter-spacing:0.45px;">EMP-153</div>
<div class="t" style="left:613.5px;top:575.41px;font-size:17px;color:#1a1a1a;font-weight:400;letter-spacing:0.9px;">Laura</div>
<div class="t" style="left:759.5px;top:575.41px;font-size:17px;color:#1a1a1a;font-weight:400;letter-spacing:0.8px;">Williams</div>
<div class="t" style="left:918.5px;top:575.41px;font-size:17px;color:#1a1a1a;font-weight:400;letter-spacing:0.7px;">Finance Specialist</div>
<div class="t" style="right:373.5px;top:575.41px;font-size:17px;color:#1a1a1a;font-weight:400;letter-spacing:0.2px;">4300</div>
<div class="t" style="right:220.5px;top:575.41px;font-size:17px;color:#1a1a1a;font-weight:400;letter-spacing:1.0px;">2/25/2025</div>
<div class="t" style="left:1410.5px;top:575.41px;font-size:17px;color:#137d13;font-weight:400;letter-spacing:0.6px;">Active</div>
<div class="t" style="left:409.5px;top:601.71px;font-size:17px;color:#1a1a1a;font-weight:400;letter-spacing:0.45px;">EMP-172</div>
<div class="t" style="left:613.5px;top:601.71px;font-size:17px;color:#1a1a1a;font-weight:400;letter-spacing:0.9px;">Olivia</div>
<div class="t" style="left:759.5px;top:601.71px;font-size:17px;color:#1a1a1a;font-weight:400;letter-spacing:0.8px;">Anderson</div>
<div class="t" style="left:918.5px;top:601.71px;font-size:17px;color:#1a1a1a;font-weight:400;letter-spacing:0.7px;">UX Designer</div>
<div class="t" style="right:373.5px;top:601.71px;font-size:17px;color:#1a1a1a;font-weight:400;letter-spacing:0.2px;">4600</div>
<div class="t" style="right:220.5px;top:601.71px;font-size:17px;color:#1a1a1a;font-weight:400;letter-spacing:1.0px;">3/11/2025</div>
<div class="t" style="left:1410.5px;top:601.71px;font-size:17px;color:#137d13;font-weight:400;letter-spacing:0.6px;">Active</div>
<div class="t" style="left:416.1px;top:628.01px;font-size:17px;color:#1a1a1a;font-weight:400;letter-spacing:0.45px;">EMP-149</div>
<div class="t" style="left:620.1px;top:628.01px;font-size:17px;color:#1a1a1a;font-weight:400;letter-spacing:0.9px;">David</div>
<div class="t" style="left:766.1px;top:628.01px;font-size:17px;color:#1a1a1a;font-weight:400;letter-spacing:0.8px;">Miller</div>
<div class="t" style="left:918.5px;top:628.01px;font-size:17px;color:#1a1a1a;font-weight:400;letter-spacing:0.7px;">Product Manager</div>
<div class="t" style="right:380.1px;top:628.01px;font-size:17px;color:#1a1a1a;font-weight:400;letter-spacing:0.2px;">5,600</div>
<div class="t" style="right:220.5px;top:628.01px;font-size:17px;color:#1a1a1a;font-weight:400;letter-spacing:1.0px;">3/15/2025</div>
<div class="t" style="left:1417.1px;top:628.01px;font-size:17px;color:#137d13;font-weight:400;letter-spacing:0.6px;">Active</div>
<div class="t" style="left:416.1px;top:654.31px;font-size:17px;color:#1a1a1a;font-weight:400;letter-spacing:0.45px;">EMP-118</div>
<div class="t" style="left:620.1px;top:654.31px;font-size:17px;color:#1a1a1a;font-weight:400;letter-spacing:0.9px;">John</div>
<div class="t" style="left:766.1px;top:654.31px;font-size:17px;color:#1a1a1a;font-weight:400;letter-spacing:0.8px;">Smith</div>
<div class="t" style="left:918.5px;top:654.31px;font-size:17px;color:#1a1a1a;font-weight:400;letter-spacing:0.7px;">HR Coordinator</div>
<div class="t" style="right:380.1px;top:654.31px;font-size:17px;color:#1a1a1a;font-weight:400;letter-spacing:0.2px;">3,900</div>
<div class="t" style="right:220.5px;top:654.31px;font-size:17px;color:#1a1a1a;font-weight:400;letter-spacing:1.0px;">3/28/2025</div>
<div class="t" style="left:1417.1px;top:654.31px;font-size:17px;color:#137d13;font-weight:400;letter-spacing:0.6px;">Active</div>
<div class="t" style="left:409.5px;top:680.61px;font-size:17px;color:#1a1a1a;font-weight:400;letter-spacing:0.45px;">EMP-160</div>
<div class="t" style="left:613.5px;top:680.61px;font-size:17px;color:#1a1a1a;font-weight:400;letter-spacing:0.9px;">James</div>
<div class="t" style="left:759.5px;top:680.61px;font-size:17px;color:#1a1a1a;font-weight:400;letter-spacing:0.8px;">Taylor</div>
<div class="t" style="left:918.5px;top:680.61px;font-size:17px;color:#1a1a1a;font-weight:400;letter-spacing:0.7px;">DevOps Engineer</div>
<div class="t" style="right:373.5px;top:680.61px;font-size:17px;color:#1a1a1a;font-weight:400;letter-spacing:0.2px;">5100</div>
<div class="t" style="right:220.5px;top:680.61px;font-size:17px;color:#1a1a1a;font-weight:400;letter-spacing:1.0px;">4/3/2025</div>
<div class="t" style="left:1410.5px;top:680.61px;font-size:17px;color:#137d13;font-weight:400;letter-spacing:0.6px;">Active</div>
<div class="t" style="left:416.1px;top:706.91px;font-size:17px;color:#1a1a1a;font-weight:400;letter-spacing:0.45px;">EMP-140</div>
<div class="t" style="left:620.1px;top:706.91px;font-size:17px;color:#1a1a1a;font-weight:400;letter-spacing:0.9px;">Sarah</div>
<div class="t" style="left:766.1px;top:706.91px;font-size:17px;color:#1a1a1a;font-weight:400;letter-spacing:0.8px;">Johnson</div>
<div class="t" style="left:918.5px;top:706.91px;font-size:17px;color:#1a1a1a;font-weight:400;letter-spacing:0.7px;">Support Engineer</div>
<div class="t" style="right:380.1px;top:706.91px;font-size:17px;color:#1a1a1a;font-weight:400;letter-spacing:0.2px;">3,700</div>
<div class="t" style="right:220.5px;top:706.91px;font-size:17px;color:#1a1a1a;font-weight:400;letter-spacing:1.0px;">4/7/2025</div>
<div class="t" style="left:1417.1px;top:706.91px;font-size:17px;color:#137d13;font-weight:400;letter-spacing:0.6px;">Active</div>
<div class="t" style="left:416.1px;top:733.21px;font-size:17px;color:#1a1a1a;font-weight:400;letter-spacing:0.45px;">EMP-101</div>
<div class="t" style="left:620.1px;top:733.21px;font-size:17px;color:#1a1a1a;font-weight:400;letter-spacing:0.9px;">Jane</div>
<div class="t" style="left:766.1px;top:733.21px;font-size:17px;color:#1a1a1a;font-weight:400;letter-spacing:0.8px;">Doe</div>
<div class="t" style="left:918.5px;top:733.21px;font-size:17px;color:#1a1a1a;font-weight:400;letter-spacing:0.7px;">Software Engineer</div>
<div class="t" style="right:380.1px;top:733.21px;font-size:17px;color:#1a1a1a;font-weight:400;letter-spacing:0.2px;">4,800</div>
<div class="t" style="right:220.5px;top:733.21px;font-size:17px;color:#1a1a1a;font-weight:400;letter-spacing:1.0px;">4/12/2025</div>
<div class="t" style="left:1417.1px;top:733.21px;font-size:17px;color:#137d13;font-weight:400;letter-spacing:0.6px;">Active</div>
<svg style="left:0;top:0" width="1627" height="800" viewBox="0 0 1627 800"><path d="M906.7 727.6 H915.8 V736.8 Z" fill="#fb8f00"/></svg>
<div class="r" style="left:407px;top:805.5px;width:1300px;height:1.2px;background:repeating-linear-gradient(90deg,#333 0 4px,transparent 4px 7px);"></div>
<div class="r" style="left:406.3px;top:806.4000000000001px;width:1.2px;height:26px;background:#3d8f58;"></div>
</body></html>
